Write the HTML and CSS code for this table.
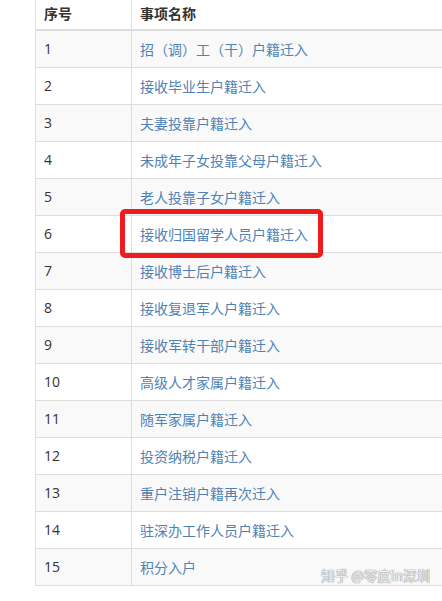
FILE: index.html
```html
<!DOCTYPE html>
<html lang="zh-CN">
<head>
<meta charset="utf-8">
<link rel="stylesheet" href="styles.css">
</head>
<body>
<div class="page">
  <table class="list">
    <thead>
      <tr><th class="num">序号</th><th class="name">事项名称</th></tr>
    </thead>
    <tbody>
      <tr><td class="num">1</td><td class="name"><a>招（调）工（干）户籍迁入</a></td></tr>
      <tr><td class="num">2</td><td class="name"><a>接收毕业生户籍迁入</a></td></tr>
      <tr><td class="num">3</td><td class="name"><a>夫妻投靠户籍迁入</a></td></tr>
      <tr><td class="num">4</td><td class="name"><a>未成年子女投靠父母户籍迁入</a></td></tr>
      <tr><td class="num">5</td><td class="name"><a>老人投靠子女户籍迁入</a></td></tr>
      <tr><td class="num">6</td><td class="name"><a>接收归国留学人员户籍迁入</a></td></tr>
      <tr><td class="num">7</td><td class="name"><a>接收博士后户籍迁入</a></td></tr>
      <tr><td class="num">8</td><td class="name"><a>接收复退军人户籍迁入</a></td></tr>
      <tr><td class="num">9</td><td class="name"><a>接收军转干部户籍迁入</a></td></tr>
      <tr><td class="num">10</td><td class="name"><a>高级人才家属户籍迁入</a></td></tr>
      <tr><td class="num">11</td><td class="name"><a>随军家属户籍迁入</a></td></tr>
      <tr><td class="num">12</td><td class="name"><a>投资纳税户籍迁入</a></td></tr>
      <tr><td class="num">13</td><td class="name"><a>重户注销户籍再次迁入</a></td></tr>
      <tr><td class="num">14</td><td class="name"><a>驻深办工作人员户籍迁入</a></td></tr>
      <tr><td class="num">15</td><td class="name"><a>积分入户</a></td></tr>
    </tbody>
  </table>
  <div class="highlight"></div>
  <div class="watermark">知乎 @零度in深圳</div>
</div>
</body>
</html>
```

FILE: styles.css
```css
html, body {
  margin: 0;
  padding: 0;
  overflow: hidden;
  background: #ffffff;
}
.page {
  position: relative;
  width: 442px;
  height: 601px;
  overflow: hidden;
  padding-left: 35px;
  box-sizing: border-box;
  font-family: "Microsoft YaHei", "Noto Sans CJK SC", "Liberation Sans", sans-serif;
  font-size: 14px;
  color: #333333;
}
.list {
  border-collapse: collapse;
  width: 440px;
  table-layout: fixed;
}
.list th, .list td {
  border: 1px solid #dddddd;
  text-align: left;
  padding: 0 8px;
  box-sizing: border-box;
}
.list th.num, .list td.num { width: 96px; }
.list thead th {
  border-top: none;
  border-bottom: 2px solid #dddddd;
  height: 30px;
  padding-bottom: 3px;
  font-weight: bold;
  color: #333333;
}
.list td {
  height: 37px;
  line-height: 20px;
}
.list tbody tr:nth-child(odd) td {
  background: #f9f9f9;
}
.list td.num {
  font-family: "Open Sans", "Noto Sans", sans-serif;
  color: #333333;
}
.list a {
  color: #4d83b6;
  text-decoration: none;
}
.highlight {
  position: absolute;
  left: 120px;
  top: 209px;
  width: 203px;
  height: 49px;
  border: 5px solid #ee1c1c;
  border-radius: 5px;
  box-sizing: border-box;
}
.watermark {
  position: absolute;
  right: 12px;
  top: 566px;
  font-size: 13.5px;
  line-height: 18px;
  color: rgba(255, 255, 255, 0.85);
  text-shadow: 0 0 1px #9a9a9a, 0 0 1px #9a9a9a, 0 0 1px #9a9a9a;
  white-space: nowrap;
}
```
